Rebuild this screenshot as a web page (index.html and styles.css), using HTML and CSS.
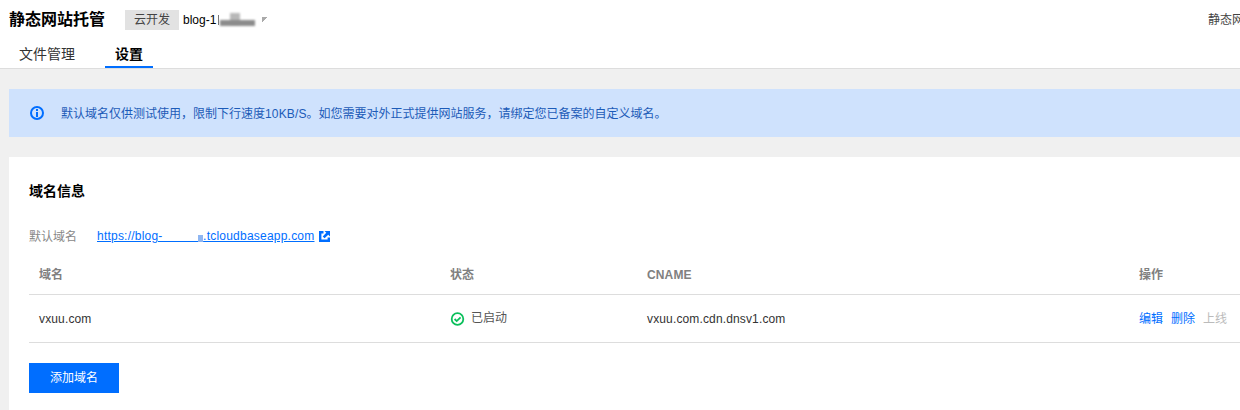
FILE: index.html
```html
<!DOCTYPE html>
<html lang="zh">
<head>
<meta charset="utf-8">
<title>静态网站托管</title>
<link rel="stylesheet" href="styles.css">
</head>
<body>
<header class="header">
  <div class="title-row">
    <h1 class="title">静态网站托管</h1>
    <span class="tag">云开发</span>
    <span class="env">blog-1<span class="blur"><i class="blur-l"></i><i class="blur-a"></i><i class="blur-b"></i></span></span>
    <span class="mark"></span>
    <span class="guide">静态网站托管使用指南</span>
  </div>
  <nav class="tabs">
    <a class="tab">文件管理</a>
    <a class="tab tab-active">设置</a>
  </nav>
</header>
<main class="main">
  <div class="alert">
    <svg class="alert-icon" viewBox="0 0 16 16" width="16" height="16"><circle cx="8" cy="8" r="6" fill="none" stroke="#006eff" stroke-width="2"/><rect x="7" y="4" width="2" height="2" fill="#006eff"/><rect x="7" y="7" width="2" height="5" fill="#006eff"/></svg>
    <span class="alert-text">默认域名仅供测试使用，限制下行速度<span class="alert-num">10KB/S</span>。如您需要对外正式提供网站服务，请绑定您已备案的自定义域名。</span>
  </div>
  <section class="card">
    <h2 class="card-title">域名信息</h2>
    <div class="default-row">
      <span class="default-label">默认域名</span>
      <a class="link">https://blog-&nbsp;&nbsp;&nbsp;&nbsp;&nbsp;&nbsp;&nbsp;&nbsp;&nbsp;&nbsp;<i class="masked-dot"></i>.tcloudbaseapp.com</a>
      <svg class="ext" viewBox="0 0 11 11" width="11" height="11"><path d="M4.5 1.2H1.2v8.6h8.6V6.5" fill="none" stroke="#006eff" stroke-width="2.4"/><path d="M5.5 0H11v5.5L9.2 3.7 5.6 7.3 3.7 5.4 7.3 1.8z" fill="#006eff"/></svg>
    </div>
    <div class="table">
      <div class="row row-head">
        <div class="cell">域名</div>
        <div class="cell">状态</div>
        <div class="cell latin">CNAME</div>
        <div class="cell">操作</div>
      </div>
      <div class="row row-body">
        <div class="cell latin">vxuu.com</div>
        <div class="cell status">
          <svg viewBox="0 0 16 16" width="16" height="16"><circle cx="7.5" cy="8" r="5.8" fill="none" stroke="#0abf5b" stroke-width="1.8"/><path d="M4.6 8l2.1 2.1L10.6 6.3" fill="none" stroke="#0abf5b" stroke-width="1.8"/></svg>
          <span class="status-text">已启动</span>
        </div>
        <div class="cell latin">vxuu.com.cdn.dnsv1.com</div>
        <div class="cell actions"><a class="action">编辑</a><a class="action">删除</a><a class="action action-off">上线</a></div>
      </div>
    </div>
    <button class="btn" type="button">添加域名</button>
  </section>
</main>
</body>
</html>
```
FILE: styles.css
```css
* { box-sizing: border-box; }
html, body { margin: 0; height: 100%; overflow: hidden; }
body {
  width: 1240px;
  height: 410px;
  background: #f0f0f0;
  color: #333;
  font: 12px/18px "Liberation Sans", "Noto Sans CJK SC", sans-serif;
}
.header { height: 69px; background: #fff; border-bottom: 1px solid #ddd; padding: 0 0 0 9px; overflow: hidden; }
.title-row { display: flex; align-items: center; height: 40px; }
.title { margin: 0 20px 0 0; font-size: 16px; line-height: 40px; font-weight: 700; color: #000; }
.tag { width: 54px; height: 20px; line-height: 20px; text-align: center; background: #e2e2e2; color: #444; }
.env { display: flex; align-items: center; margin-left: 4px; color: #000; }
.blur { position: relative; display: block; width: 39px; height: 14px; }
.blur-l { position: absolute; left: 2px; top: 2px; width: 1px; height: 10px; background: #777; }
.blur-a { position: absolute; left: 14px; top: 0; width: 10px; height: 11px; background: #b8b8b8; filter: blur(1px); }
.blur-b { position: absolute; left: 4px; bottom: 1px; width: 35px; height: 6px; background: #8c8c8c; filter: blur(1.2px); }
.mark { width: 5px; height: 6px; margin-left: 7px; background: linear-gradient(135deg, #aaa 50%, transparent 50%); }
.guide { margin-left: auto; width: 32px; white-space: nowrap; overflow: hidden; color: #444; }
.tabs { display: flex; height: 28px; }
.tab { height: 28px; padding: 0 10px; margin-right: 20px; font-size: 14px; line-height: 28px; color: #333; }
.tab-active { width: 48px; font-weight: 700; color: #000; border-bottom: 2px solid #006eff; }
.main { width: 1300px; padding: 20px 0 0 9px; }
.alert { display: flex; align-items: center; gap: 16px; height: 48px; padding-left: 20px; background: #cfe2fd; color: #1c5bb8; }
.alert-icon { flex: none; }
.alert-text { padding-top: 2px; }
.alert-num { letter-spacing: .15px; }
.card { height: 260px; margin-top: 20px; padding: 20px 20px 0; background: #fff; }
.card-title { margin: 0; font-size: 14px; line-height: 28px; font-weight: 700; color: #000; }
.default-row { display: flex; align-items: center; margin-top: 23px; height: 18px; }
.default-label { width: 68px; color: #888; }
.link { margin-bottom: 2px; color: #006eff; text-decoration: underline; letter-spacing: .22px; }
.masked-dot { display: inline-block; width: 5px; height: 7px; background: #8fb6f2; vertical-align: -2px; }
.ext { margin: 0 0 1px 5px; }
.table { margin-top: 9px; }
.row { display: grid; grid-template-columns: 411px 197px 492px 1fr; padding-left: 10px; border-bottom: 1px solid #ddd; align-items: center; }
.row-head { height: 40px; font-weight: 700; color: #808080; }
.row-body { height: 48px; }
.latin { letter-spacing: .14px; }
.status { display: flex; align-items: center; gap: 5px; color: #333; }
.status-text { margin-bottom: 2px; color: #555; }
.actions { display: flex; gap: 8px; white-space: nowrap; }
.action { color: #006eff; }
.action-off { color: #bbb; }
.btn { display: block; width: 90px; height: 30px; margin-top: 20px; border: 0; padding: 0; background: #006eff; color: #fff; font: inherit; }
```
